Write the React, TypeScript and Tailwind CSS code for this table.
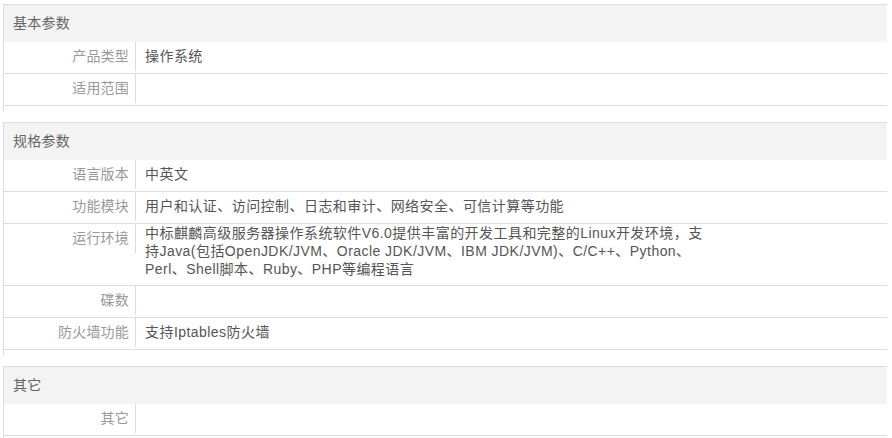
import React from 'react';

type Row = { label: string; value?: React.ReactNode; multi?: boolean };

const sections: { title: string; rows: Row[] }[] = [
  {
    title: '基本参数',
    rows: [
      { label: '产品类型', value: '操作系统' },
      { label: '适用范围', value: '' },
    ],
  },
  {
    title: '规格参数',
    rows: [
      { label: '语言版本', value: '中英文' },
      { label: '功能模块', value: '用户和认证、访问控制、日志和审计、网络安全、可信计算等功能' },
      {
        label: '运行环境',
        multi: true,
        value: (
          <>
            中标麒麟高级服务器操作系统软件V6.0提供丰富的开发工具和完整的Linux开发环境，支
            <br />
            持Java(包括OpenJDK/JVM、Oracle JDK/JVM、IBM JDK/JVM)、C/C++、Python、
            <br />
            Perl、Shell脚本、Ruby、PHP等编程语言
          </>
        ),
      },
      { label: '碟数', value: '' },
      { label: '防火墙功能', value: '支持Iptables防火墙' },
    ],
  },
  {
    title: '其它',
    rows: [{ label: '其它', value: '' }],
  },
];

const App = () => {
  return (
    <div
      className="w-[892px] h-[438px] overflow-hidden bg-white pt-[4px] pl-[3px] pr-[5px] text-[14px]"
      style={{ fontFamily: '"Liberation Sans", "Noto Sans CJK SC", sans-serif' }}
    >
      {sections.map((sec) => (
        <div key={sec.title} className="border-l border-t border-[#dcdcdc] pb-[6px] mb-[10px]">
          {/* Section header */}
          <div className="h-[37px] leading-[37px] bg-[#f3f3f3] pl-[9px] tracking-[0.25px] text-[#666]">{sec.title}</div>

          {sec.rows.map((row) => (
            <div key={row.label} className="flex items-start border-b border-[#dcdcdc] min-h-[32px]">
              <div className="w-[132px] shrink-0 h-[29px] leading-[29px] text-right pr-[6px] tracking-[0.2px] border-r border-[#dcdcdc] text-[#999]">
                {row.label}
              </div>
              {row.multi ? (
                <div className="pl-[9px] leading-[18px] pb-[7px] tracking-[0.45px] text-[#555]">{row.value}</div>
              ) : (
                <div className="pl-[9px] leading-[29px] tracking-[0.45px] text-[#555]">{row.value}</div>
              )}
            </div>
          ))}
        </div>
      ))}
    </div>
  );
};

export default App;
